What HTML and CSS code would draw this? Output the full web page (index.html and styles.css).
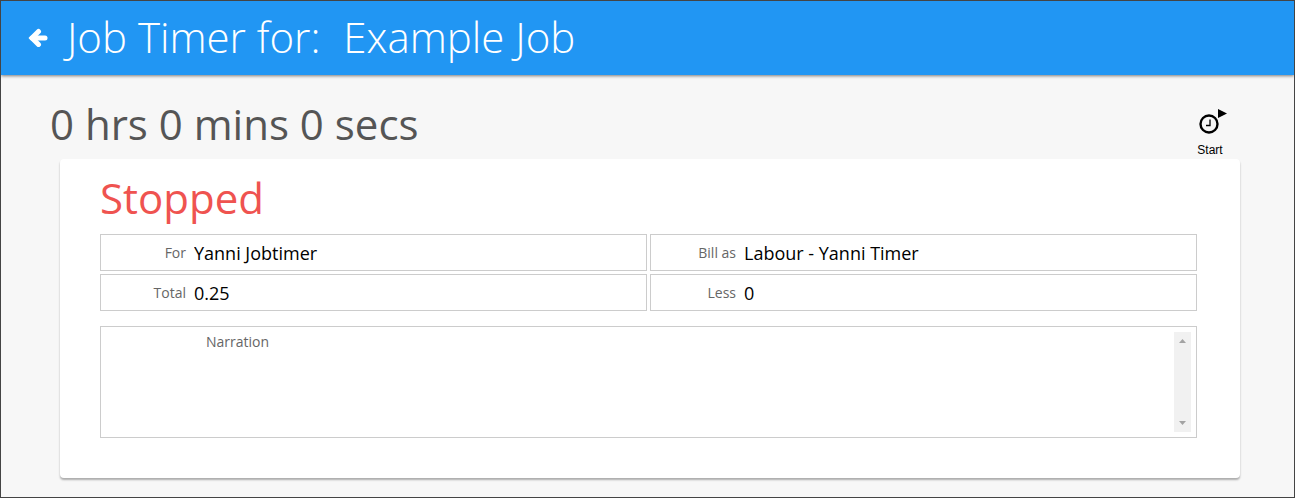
FILE: index.html
```html
<!DOCTYPE html>
<html lang="en">
<head>
    <meta charset="UTF-8">
    <meta name="viewport" content="width=device-width, initial-scale=1.0">
    <title>Job Timer</title>
    <link rel="stylesheet" href="styles.css">
</head>
<body>
    <header class="header">
        <a href="#" class="back-link" aria-label="Back">
            <svg width="20" height="20" viewBox="0 0 20 20" fill="none" stroke="#fff">
                <path d="M10.5 4.5 L4 11 L10.5 17.5" stroke-width="5" stroke-linecap="round" stroke-linejoin="miter"/>
                <path d="M4 11 H17" stroke-width="5" stroke-linecap="round"/>
            </svg>
        </a>
        <h1 class="title">Job Timer for: <span class="job-name">Example Job</span></h1>
    </header>

    <main>
        <!-- Elapsed time and start button -->
        <div class="timer-bar">
            <div class="elapsed">0 hrs 0 mins 0 secs</div>
            <button type="button" class="start-btn">
                <svg width="32" height="32" viewBox="0 0 32 32">
                    <circle cx="15" cy="15" r="8.5" fill="none" stroke="#000" stroke-width="2.4"/>
                    <path d="M16 10.5 V16.5 H12" fill="none" stroke="#000" stroke-width="1.3"/>
                    <path d="M24 0 L33 4.5 L24 9 Z" fill="#000"/>
                </svg>
                Start
            </button>
        </div>

        <!-- Timer details -->
        <form class="card">
            <h2 class="status">Stopped</h2>
            <div class="field-grid">
                <div class="field">
                    <label for="for">For</label>
                    <input type="text" id="for" value="Yanni Jobtimer">
                </div>
                <div class="field">
                    <label for="bill-as">Bill as</label>
                    <input type="text" id="bill-as" value="Labour - Yanni Timer">
                </div>
                <div class="field">
                    <label for="total">Total</label>
                    <input type="text" id="total" value="0.25">
                </div>
                <div class="field">
                    <label for="less">Less</label>
                    <input type="text" id="less" value="0">
                </div>
            </div>
            <div class="field narration">
                <label for="narration">Narration</label>
                <textarea id="narration"></textarea>
                <div class="scrollbar" aria-hidden="true">
                    <svg width="17" height="17" viewBox="0 0 17 17"><path d="M5 11 L8.5 7 L12 11 Z" fill="#a3a3a3"/></svg>
                    <svg width="17" height="17" viewBox="0 0 17 17"><path d="M5 6 L8.5 10 L12 6 Z" fill="#a3a3a3"/></svg>
                </div>
            </div>
        </form>
    </main>
</body>
</html>
```
FILE: styles.css
```css
* {
    box-sizing: border-box;
}

body {
    margin: 0;
    min-height: 100vh;
    border: 1px solid #444;
    background: #f7f7f7;
    color: #000;
    font-family: "Open Sans", sans-serif;
}

/* Header */
.header {
    display: flex;
    align-items: center;
    gap: 19px;
    padding: 7px 27px 10px;
    background: #2196f3;
    color: #fff;
    box-shadow: 0 1px 3px rgba(0, 0, 0, 0.5);
}

.back-link {
    display: flex;
}

.title {
    margin: 0;
    font-size: 42px;
    font-weight: 300;
    line-height: 57px;
}

.job-name {
    margin-left: 12px;
}

/* Timer bar */
.timer-bar {
    display: flex;
    justify-content: space-between;
    align-items: flex-end;
    padding: 20px 68px 0 49px;
}

.elapsed {
    padding-bottom: 7px;
    color: #555;
    font-size: 42px;
    line-height: 57px;
}

.start-btn {
    display: flex;
    flex-direction: column;
    align-items: center;
    padding: 0;
    border: none;
    background: none;
    color: #000;
    font-family: "Liberation Sans", Arial, sans-serif;
    font-size: 12px;
    line-height: 18px;
    cursor: pointer;
}

.start-btn svg {
    overflow: visible;
}

/* Card */
.card {
    margin: 0 54px 18px 59px;
    padding: 10px 43px 40px 40px;
    border-radius: 4px;
    background: #fff;
    box-shadow: 0 2px 2px rgba(0, 0, 0, 0.3);
}

.status {
    margin: 0 0 8px;
    color: #ef5350;
    font-size: 42px;
    font-weight: 400;
    line-height: 57px;
}

.field-grid {
    display: grid;
    grid-template-columns: 1fr 1fr;
    gap: 3px;
}

.field {
    display: flex;
    align-items: center;
    height: 37px;
    border: 1px solid #ccc;
}

.field label {
    width: 85px;
    color: #666;
    font-size: 14px;
    text-align: right;
}

.field input,
.field textarea {
    flex: 1;
    min-width: 0;
    padding: 0 8px;
    border: none;
    outline: none;
    background: none;
    color: #000;
    font-family: inherit;
    font-size: 18px;
}

.narration {
    align-items: flex-start;
    height: auto;
    margin-top: 15px;
    padding: 5px;
}

.narration label {
    width: 163px;
}

.narration textarea {
    height: 100px;
    resize: none;
}

.scrollbar {
    display: flex;
    flex-direction: column;
    justify-content: space-between;
    height: 100px;
    background: #f1f1f1;
}
```
